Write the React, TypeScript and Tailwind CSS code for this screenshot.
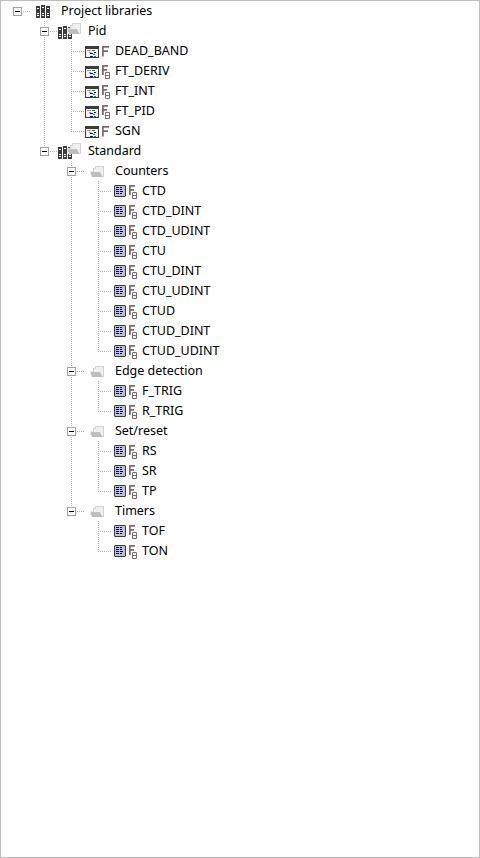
import React from "react";

type Kind = "root" | "library" | "folder" | "program" | "block";
type Row = {
  label: string;
  kind: Kind;
  // one entry per ancestor column: whether its guide line continues through the row
  rails: boolean[];
  last?: boolean;
  plain?: boolean;
};

const pid = [false, true];
const inner = [false, false, true];
const tail = [false, false, false];

const rows: Row[] = [
  { label: "Project libraries", kind: "root", rails: [] },
  { label: "Pid", kind: "library", rails: [false] },
  { label: "DEAD_BAND", kind: "program", rails: pid, plain: true },
  { label: "FT_DERIV", kind: "program", rails: pid },
  { label: "FT_INT", kind: "program", rails: pid },
  { label: "FT_PID", kind: "program", rails: pid },
  { label: "SGN", kind: "program", rails: pid, plain: true, last: true },
  { label: "Standard", kind: "library", rails: [false], last: true },
  { label: "Counters", kind: "folder", rails: [false, false] },
  { label: "CTD", kind: "block", rails: inner },
  { label: "CTD_DINT", kind: "block", rails: inner },
  { label: "CTD_UDINT", kind: "block", rails: inner },
  { label: "CTU", kind: "block", rails: inner },
  { label: "CTU_DINT", kind: "block", rails: inner },
  { label: "CTU_UDINT", kind: "block", rails: inner },
  { label: "CTUD", kind: "block", rails: inner },
  { label: "CTUD_DINT", kind: "block", rails: inner },
  { label: "CTUD_UDINT", kind: "block", rails: inner, last: true },
  { label: "Edge detection", kind: "folder", rails: [false, false] },
  { label: "F_TRIG", kind: "block", rails: inner },
  { label: "R_TRIG", kind: "block", rails: inner, last: true },
  { label: "Set/reset", kind: "folder", rails: [false, false] },
  { label: "RS", kind: "block", rails: inner },
  { label: "SR", kind: "block", rails: inner },
  { label: "TP", kind: "block", rails: inner, last: true },
  { label: "Timers", kind: "folder", rails: [false, false], last: true },
  { label: "TOF", kind: "block", rails: tail },
  { label: "TON", kind: "block", rails: tail, last: true },
];

function Rail({ on }: { on: boolean }) {
  return (
    <svg width="27" height="20" className="shrink-0" shapeRendering="crispEdges">
      {on && <path d="M13.5 0V20" stroke="#b4b4b4" strokeDasharray="1 1" />}
    </svg>
  );
}

function Joint({ row }: { row: Row }) {
  const box = row.kind === "root" || row.kind === "library" || row.kind === "folder";
  return (
    <svg width="27" height="20" className="shrink-0" shapeRendering="crispEdges">
      <g stroke="#b4b4b4" strokeDasharray="1 1" fill="none">
        {row.kind !== "root" && <path d={row.last ? "M13.5 0V11" : "M13.5 0V20"} />}
        <path d={box ? "M19 10.5H26" : "M13 10.5H26"} />
      </g>
      {box && (
        <g>
          <rect x="9.5" y="6.5" width="8" height="8" fill="#fff" stroke="#a0a0a0" />
          <path d="M11 10.5H16" stroke="#000" />
        </g>
      )}
    </svg>
  );
}

function Books() {
  return (
    <g>
      <path fill="#3c3c3c" d="M0 1h4v12H0zM5 0h4v13H5zM10 1h4v12h-4z" />
      <path
        fill="#fff"
        d="M1 3h2v1H1zM6 2h2v1H6zM11 3h2v1h-2zM1 8h2v1H1zM6 8h2v1H6zM11 8h2v1h-2zM1 10h2v1H1zM6 10h2v1H6zM11 10h2v1h-2z"
      />
    </g>
  );
}

function Folder() {
  return (
    <g>
      <path fill="#f0f0f0" stroke="#d2d2d2" d="M3.5 10.5V2.5H5.5V.5H13.5V10.5H10" />
      <path fill="#e6e6e6" d="M0 5h3v1H0zM0 6h2v5H1z" />
      <path fill="#bebebe" d="M1 6h9v1h1v2h1v2H2V9H1z" />
    </g>
  );
}

function Icon({ kind }: { kind: Kind }) {
  if (kind === "root")
    return (
      <svg width="30" height="20" className="shrink-0" shapeRendering="crispEdges">
        <g transform="translate(5 4)"><Books /></g>
      </svg>
    );
  if (kind === "library")
    return (
      <svg width="30" height="20" className="shrink-0" shapeRendering="crispEdges">
        <g transform="translate(0 5)"><Books /></g>
        <g transform="translate(9 2)"><Folder /></g>
      </svg>
    );
  if (kind === "folder")
    return (
      <svg width="30" height="20" className="shrink-0" shapeRendering="crispEdges">
        <g transform="translate(5 5)"><Folder /></g>
      </svg>
    );
  if (kind === "program")
    return (
      <svg width="14" height="20" className="shrink-0" shapeRendering="crispEdges">
        <rect x=".5" y="5.5" width="13" height="11" fill="#f0f0f0" stroke="#3c3c3c" />
        <path fill="#3c3c3c" d="M0 5h14v3H0z" />
        <path fill="#969696" d="M2 9h4v1H2zM4 11h2v1H4z" />
        <path fill="#00a000" d="M7 9h3v1H7zM8 13h2v1H8zM9 15h2v1H9z" />
        <path fill="#0000ff" d="M5 12h3v1H5zM9 11h2v1H9zM5 15h3v1H5z" />
      </svg>
    );
  return (
    <svg width="14" height="20" className="shrink-0" shapeRendering="crispEdges">
      <rect x="2.5" y="4.5" width="11" height="11" fill="#c3c3c3" stroke="#3c3c3c" />
      <path fill="#a0a0a0" d="M2 4h1v1H2zM13 4h1v1h-1zM2 15h1v1H2zM13 15h1v1h-1z" />
      <path fill="#000080" d="M4 6h3v1H4zM8 6h2v1H8zM4 8h3v1H4zM8 8h2v1H8zM4 10h3v1H4zM8 10h3v1H8zM4 12h3v1H4zM8 12h2v1H8z" />
    </svg>
  );
}

function FunctionMark({ plain }: { plain?: boolean }) {
  return (
    <svg width="16" height="20" className="shrink-0">
      <g fill="none" stroke="#7d6e6e">
        {plain ? (
          <path strokeWidth="1.8" d="M10 5.9H3.9V15.5M3.9 10.2H9" />
        ) : (
          <>
            <path strokeWidth="1.8" d="M9 4.9H3.9V14M3.9 8.9H8" />
            <path d="M6.5 11.5H10.5V17.5H6.5ZM6.5 14.5H10.5" />
          </>
        )}
      </g>
    </svg>
  );
}

// Ancestor columns of each kind of row, outermost first.
function ancestorRails(row: Row): boolean[] {
  if (row.kind === "program") return [false, true];
  if (row.kind === "block") return row.rails;
  return row.rails;
}

export default function App() {
  return (
    <main className="h-[858px] w-[480px] overflow-hidden border border-[#bebebe] bg-white pl-[3px] font-['Noto_Sans','Open_Sans',sans-serif] text-[12.5px] text-black">
      <ul>
        {rows.map((row) => (
          <li key={row.label} className="flex h-5 items-center">
            {ancestorRails(row).map((on, i) => (
              <Rail key={i} on={on} />
            ))}
            <Joint row={row} />
            <Icon kind={row.kind} />
            {(row.kind === "program" || row.kind === "block") && <FunctionMark plain={row.plain} />}
            <span className="whitespace-pre leading-5 tracking-[-0.02px]">{row.label}</span>
          </li>
        ))}
      </ul>
    </main>
  );
}
